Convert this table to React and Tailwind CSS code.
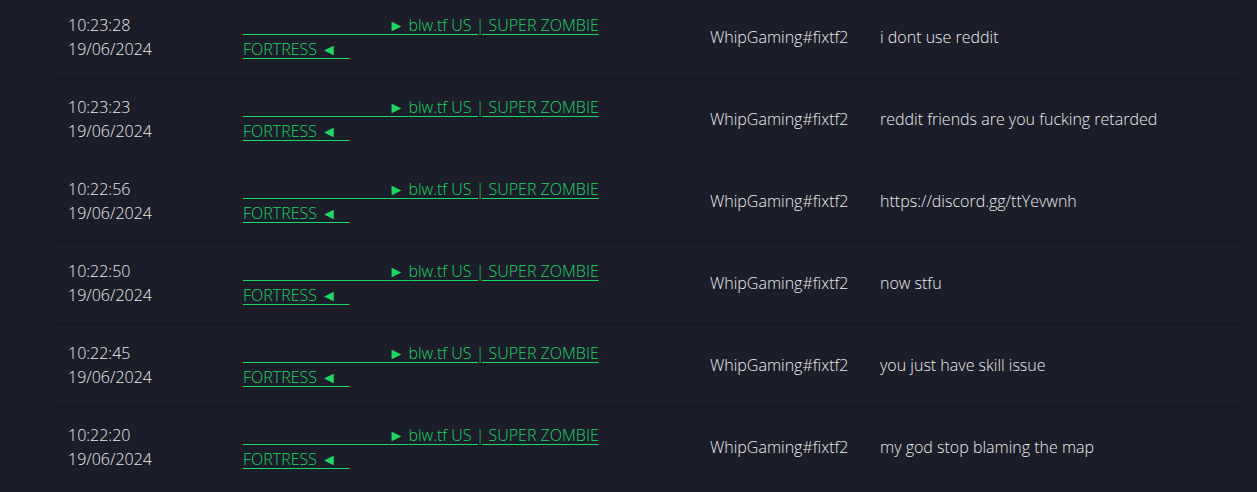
import React from 'react';

const rows = [
  { time: '10:23:28', date: '19/06/2024', name: 'WhipGaming#fixtf2', msg: 'i dont use reddit' },
  { time: '10:23:23', date: '19/06/2024', name: 'WhipGaming#fixtf2', msg: 'reddit friends are you fucking retarded' },
  { time: '10:22:56', date: '19/06/2024', name: 'WhipGaming#fixtf2', msg: 'https://discord.gg/ttYevwnh' },
  { time: '10:22:50', date: '19/06/2024', name: 'WhipGaming#fixtf2', msg: 'now stfu' },
  { time: '10:22:45', date: '19/06/2024', name: 'WhipGaming#fixtf2', msg: 'you just have skill issue' },
  { time: '10:22:20', date: '19/06/2024', name: 'WhipGaming#fixtf2', msg: 'my god stop blaming the map' },
];

const pad = '\u00a0'.repeat(35);

const App = () => {
  return (
    <div
      className="min-h-screen bg-[#1b1d2a] px-[52px] overflow-hidden text-[16px] font-light text-[#ececec]"
      style={{ fontFamily: '"Open Sans", "Noto Sans", sans-serif' }}
    >
      <div className="-mt-[3px] w-[1189px]">
        {rows.map((row, i) => (
          <div
            key={i}
            className="grid grid-cols-[175px_467px_170px_1fr] items-center h-[82px] border-b-2 border-[#171923] leading-6"
          >
            <div className="px-4">
              <div>{row.time}</div>
              <div>{row.date}</div>
            </div>
            <div className="px-4">
              <a href="#" className="text-[#1ed760] underline decoration-[#1ed760] underline-offset-[3px] whitespace-nowrap">
                {pad}►{'\u00a0'}blw.tf US | SUPER ZOMBIE
                <br />
                FORTRESS ◄{'\u00a0\u00a0\u00a0'}
              </a>
            </div>
            <div className="px-4">{row.name}</div>
            <div className="px-4">{row.msg}</div>
          </div>
        ))}
      </div>
    </div>
  );
};

export default App;
